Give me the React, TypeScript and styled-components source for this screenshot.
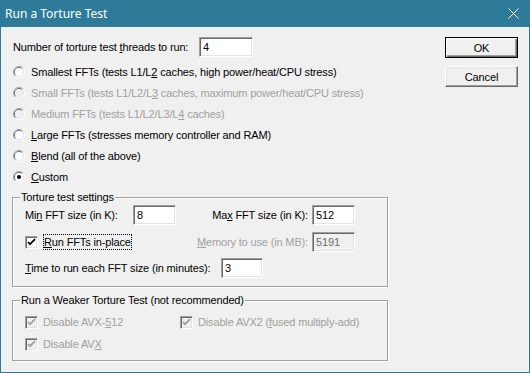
import React from 'react';
import styled, { createGlobalStyle } from 'styled-components';

const GlobalStyle = createGlobalStyle`
  html, body {
    margin: 0;
    padding: 0;
    background: #f0f0f0;
  }
  body {
    font-family: "Liberation Sans", Arial, sans-serif;
    font-size: 11px;
    letter-spacing: -0.15px;
    color: #000;
  }
`;

const Window = styled.div`
  width: 530px;
  height: 373px;
  box-sizing: border-box;
  border: 1px solid #2d7b99;
  border-top: none;
  background: #f0f0f0;
  display: flex;
  flex-direction: column;
`;

const TitleBar = styled.div`
  height: 27px;
  margin: 0 -1px;
  padding: 0 11px 0 5px;
  background: #2d7b99;
  color: #fff;
  display: flex;
  align-items: center;
  justify-content: space-between;
  font-family: "Noto Sans", "Liberation Sans", sans-serif;
  font-size: 12px;
  letter-spacing: 0;
`;

const Body = styled.div`
  display: flex;
  padding: 10px 11px 0 12px;
`;

const LeftColumn = styled.div`
  width: 375px;
  display: flex;
  flex-direction: column;
`;

const RightColumn = styled.div`
  margin-left: auto;
  width: 73px;
  display: flex;
  flex-direction: column;
  gap: 8px;
`;

const Button = styled.div<{ $default?: boolean }>`
  height: 21px;
  box-sizing: border-box;
  display: flex;
  align-items: center;
  justify-content: center;
  background: #f0f0f0;
  border: 1px solid ${p => (p.$default ? '#000' : '#fff')};
  ${p => (p.$default ? '' : 'border-color: #fff #696969 #696969 #fff;')}
  box-shadow: ${p =>
    p.$default
      ? 'inset 1px 1px #fff, inset -1px -1px #696969, inset -2px -2px #a0a0a0'
      : 'inset -1px -1px #a0a0a0, inset 1px 1px #e3e3e3'};
`;

const Row = styled.div<{ $height?: number }>`
  height: ${p => p.$height ?? 20}px;
  display: flex;
  align-items: center;
`;

const Label = styled.span<{ $width?: number; $disabled?: boolean; $right?: boolean }>`
  ${p => (p.$width ? `width: ${p.$width}px; flex: none;` : '')}
  color: ${p => (p.$disabled ? '#a0a0a0' : '#000')};
  white-space: nowrap;
  ${p => (p.$right ? 'text-align: right; padding-right: 4px;' : '')}
`;

const Key = styled.span`
  text-decoration: underline;
  text-underline-offset: 1px;
`;

const Field = styled.input<{ $width: number }>`
  width: ${p => p.$width}px;
  height: 20px;
  box-sizing: border-box;
  margin: 0;
  padding: 0 0 0 3px;
  font: inherit;
  letter-spacing: inherit;
  color: #000;
  background: #fff;
  border: 1px solid;
  border-color: #a0a0a0 #fff #fff #a0a0a0;
  box-shadow: inset 1px 1px #696969, inset -1px -1px #e3e3e3;
  outline: none;
  &:disabled {
    background: #f0f0f0;
    color: #6d6d6d;
  }
`;

const RadioRow = styled.label<{ $disabled?: boolean }>`
  height: 21px;
  display: flex;
  align-items: center;
  gap: 6px;
  color: ${p => (p.$disabled ? '#a0a0a0' : '#000')};
  white-space: nowrap;
`;

const RadioList = styled.div`
  margin-top: 4px;
  display: flex;
  flex-direction: column;
`;

const Group = styled.div<{ $top: number; $padding: string }>`
  position: relative;
  margin: ${p => p.$top}px 0 0 -1px;
  padding: ${p => p.$padding};
  border: 1px solid #a0a0a0;
  box-shadow: 1px 1px 0 #fff, inset 1px 1px 0 #fff;
  display: flex;
  flex-direction: column;
`;

const Legend = styled.span`
  position: absolute;
  top: -7px;
  left: 7px;
  padding: 0 1px;
  background: #f0f0f0;
  white-space: nowrap;
`;

const SizeGrid = styled.div`
  display: grid;
  grid-template-columns: 108px 43px 136px 43px;
  align-items: center;
  height: 20px;
`;

const CheckRow = styled.label<{ $disabled?: boolean }>`
  display: flex;
  align-items: center;
  gap: 5px;
  height: 20px;
  color: ${p => (p.$disabled ? '#a0a0a0' : '#000')};
  white-space: nowrap;
`;

const Focus = styled.span`
  padding: 2px 1px 2px 1px;
  outline: 1px dotted #000;
  outline-offset: -1px;
`;

const CheckBox = styled.span<{ $disabled?: boolean }>`
  width: 13px;
  height: 13px;
  box-sizing: border-box;
  flex: none;
  display: flex;
  align-items: center;
  justify-content: center;
  background: ${p => (p.$disabled ? '#f0f0f0' : '#fff')};
  border: 1px solid;
  border-color: #a0a0a0 #fff #fff #a0a0a0;
  box-shadow: inset 1px 1px #696969, inset -1px -1px #e3e3e3;
`;

const WeakGrid = styled.div`
  display: grid;
  grid-template-columns: 155px auto;
  row-gap: 2px;
`;

const Tick = ({ disabled }: { disabled?: boolean }) => (
  <CheckBox $disabled={disabled}>
    <svg width="9" height="9" viewBox="0 0 9 9">
      <path d="M1 4 L3 6.2 L8 1.2" fill="none" stroke={disabled ? '#a0a0a0' : '#000'} strokeWidth="1.8" />
    </svg>
  </CheckBox>
);

const Radio = ({ checked, disabled }: { checked?: boolean; disabled?: boolean }) => (
  <svg width="12" height="12" viewBox="0 0 12 12" style={{ flex: 'none' }}>
    <path d="M2.1 9.9 A5.5 5.5 0 0 1 9.9 2.1" fill="none" stroke="#a0a0a0" />
    <path d="M9.9 2.1 A5.5 5.5 0 0 1 2.1 9.9" fill="none" stroke="#fff" />
    <path d="M2.8 9.2 A4.5 4.5 0 0 1 9.2 2.8" fill="none" stroke="#696969" />
    <path d="M9.2 2.8 A4.5 4.5 0 0 1 2.8 9.2" fill="none" stroke="#e3e3e3" />
    <circle cx="6" cy="6" r="4" fill={disabled ? '#f0f0f0' : '#fff'} />
    {checked && <circle cx="6" cy="6" r="2" fill="#000" />}
  </svg>
);

export default function App() {
  return (
    <>
      <GlobalStyle />
      <Window>
        <TitleBar>
          <span>Run a Torture Test</span>
          <svg width="11" height="11" viewBox="0 0 11 11">
            <path d="M0.5 0.5 L10.5 10.5 M10.5 0.5 L0.5 10.5" stroke="#fff" strokeWidth="1" />
          </svg>
        </TitleBar>
        <Body>
          <LeftColumn>
            <Row>
              <Label $width={186}>
                Number of torture test <Key>t</Key>hreads to run:
              </Label>
              <Field $width={54} readOnly value="4" />
            </Row>
            <RadioList>
              <RadioRow>
                <Radio />
                <span>
                  Smallest FFTs (tests L1/L<Key>2</Key> caches, high power/heat/CPU stress)
                </span>
              </RadioRow>
              <RadioRow $disabled>
                <Radio disabled />
                <span>
                  Small FFTs (tests L1/L2/L<Key>3</Key> caches, maximum power/heat/CPU stress)
                </span>
              </RadioRow>
              <RadioRow $disabled>
                <Radio disabled />
                <span>
                  Medium FFTs (tests L1/L2/L3/L<Key>4</Key> caches)
                </span>
              </RadioRow>
              <RadioRow>
                <Radio />
                <span>
                  <Key>L</Key>arge FFTs (stresses memory controller and RAM)
                </span>
              </RadioRow>
              <RadioRow>
                <Radio />
                <span>
                  <Key>B</Key>lend (all of the above)
                </span>
              </RadioRow>
              <RadioRow>
                <Radio checked />
                <span>
                  <Key>C</Key>ustom
                </span>
              </RadioRow>
            </RadioList>

            <Group $top={10} $padding="7px 0 8px 12px">
              <Legend>Torture test settings</Legend>
              <SizeGrid>
                <Label>
                  Mi<Key>n</Key> FFT size (in K):
                </Label>
                <Field $width={43} readOnly value="8" />
                <Label $right>
                  Ma<Key>x</Key> FFT size (in K):
                </Label>
                <Field $width={43} readOnly value="512" />
              </SizeGrid>
              <SizeGrid style={{ marginTop: 7 }}>
                <CheckRow style={{ gridColumn: '1 / 3' }}>
                  <Tick />
                  <Focus>
                    <Key>R</Key>un FFTs in-place
                  </Focus>
                </CheckRow>
                <Label $right $disabled>
                  <Key>M</Key>emory to use (in MB):
                </Label>
                <Field $width={43} disabled value="5191" />
              </SizeGrid>
              <Row style={{ marginTop: 6 }}>
                <Label $width={196}>
                  <Key>T</Key>ime to run each FFT size (in minutes):
                </Label>
                <Field $width={42} readOnly value="3" />
              </Row>
            </Group>

            <Group $top={13} $padding="11px 0 6px 12px">
              <Legend>Run a Weaker Torture Test (not recommended)</Legend>
              <WeakGrid>
                <CheckRow $disabled>
                  <Tick disabled />
                  <span>
                    Disable AVX-<Key>5</Key>12
                  </span>
                </CheckRow>
                <CheckRow $disabled>
                  <Tick disabled />
                  <span>
                    Disable AVX2 (<Key>f</Key>used multiply-add)
                  </span>
                </CheckRow>
                <CheckRow $disabled>
                  <Tick disabled />
                  <span>
                    Disable AV<Key>X</Key>
                  </span>
                </CheckRow>
              </WeakGrid>
            </Group>
          </LeftColumn>
          <RightColumn>
            <Button $default>OK</Button>
            <Button>Cancel</Button>
          </RightColumn>
        </Body>
      </Window>
    </>
  );
}
